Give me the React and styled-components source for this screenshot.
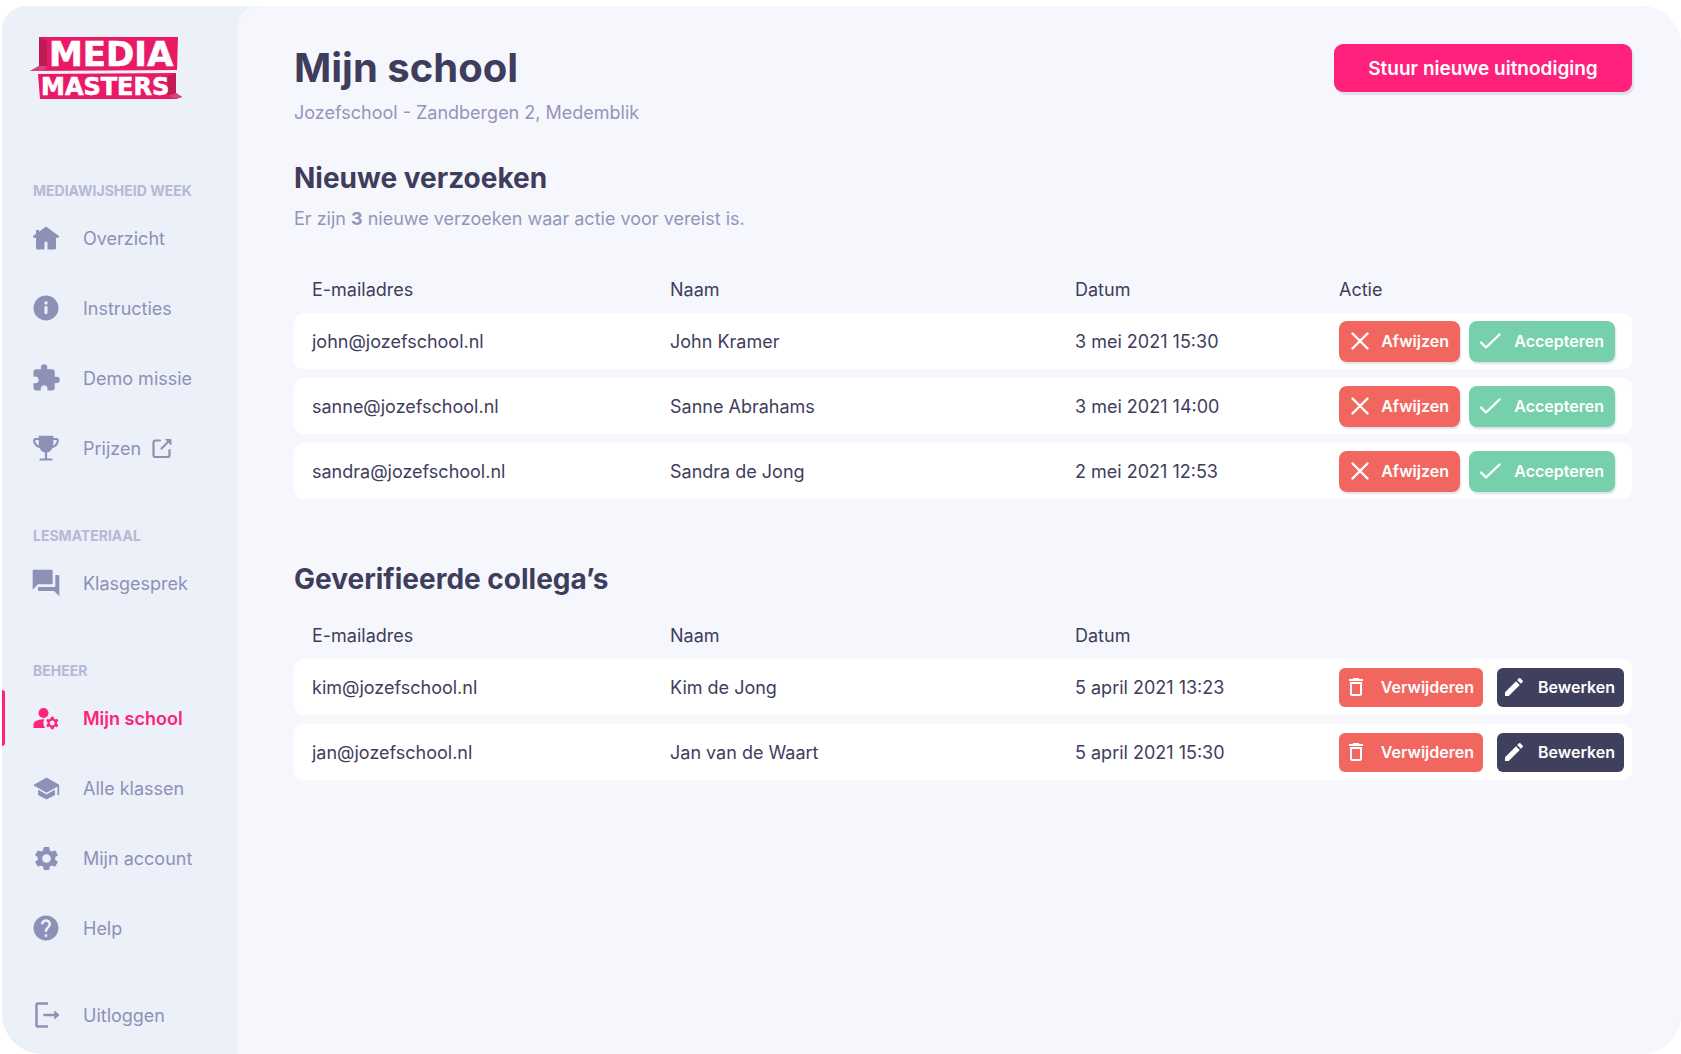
import React from 'react';
import styled, { createGlobalStyle } from 'styled-components';
import { MdExtension, MdForum, MdHelp, MdSettings, MdDeleteOutline, MdEdit, MdManageAccounts } from 'react-icons/md';
import { IoSchool } from 'react-icons/io5';

const GlobalStyle = createGlobalStyle`
  * {
    box-sizing: border-box;
  }

  body {
    margin: 0;
    background: #ffffff;
    color: #3f3d5c;
    font-family: Inter, Roboto, 'Liberation Sans', sans-serif;
    font-size: 18px;
  }
`;

const Page = styled.div`
  display: flex;
  min-height: 100vh;
  padding: 6px 0 0 2px;
`;

const Shell = styled.div`
  display: flex;
  flex: 1;
  overflow: hidden;
  border-radius: 24px 40px 40px 40px;
  background: #ebf0f9;
`;

const Sidebar = styled.aside`
  flex: 0 0 236px;
  padding-top: 22px;
`;

const LogoLink = styled.a`
  display: block;
  height: 151px;
  padding-left: 26px;
`;

const NavSection = styled.nav`
  margin-bottom: 41px;

  &:last-of-type {
    margin-bottom: 17px;
  }
`;

const NavHeading = styled.h2`
  margin: 0;
  padding-left: 31px;
  color: #b7b8d3;
  font-size: 14px;
  font-weight: 700;
  line-height: 24px;
  text-transform: uppercase;
`;

const NavItem = styled.a`
  display: flex;
  align-items: center;
  height: 70px;
  color: ${(props) => (props.$active ? '#ff217c' : '#8f90b6')};
  font-weight: ${(props) => (props.$active ? 600 : 400)};
  text-decoration: none;

  &::before {
    content: '';
    width: 3px;
    height: 56px;
    border-radius: 0 3px 3px 0;
    background: ${(props) => (props.$active ? '#ff217c' : 'transparent')};
  }
`;

const NavIcon = styled.span`
  display: flex;
  justify-content: center;
  width: 32px;
  margin: 0 21px 0 25px;
`;

const ExternalMark = styled.span`
  display: flex;
  margin-left: 10px;
`;

const Main = styled.main`
  flex: 1;
  min-width: 0;
  padding: 38px 49px 40px 56px;
  border-top-left-radius: 20px;
  background: #f6f7fd;
`;

const Header = styled.header`
  display: flex;
  align-items: flex-start;
  justify-content: space-between;
`;

const Title = styled.h1`
  margin: 0;
  font-size: 40px;
  font-weight: 700;
  line-height: 48px;
`;

const Subtitle = styled.p`
  margin: 0;
  color: #9495ba;
  line-height: 42px;
`;

const InviteButton = styled.button`
  height: 48px;
  width: 298px;
  border: 0;
  border-radius: 9px;
  background: #ff217c;
  box-shadow: 2px 3px 1px #dfe0ea;
  color: #ffffff;
  font: inherit;
  font-size: 19px;
  font-weight: 600;
  cursor: pointer;
`;

const Section = styled.section`
  margin-top: ${(props) => props.$gap}px;
`;

const SectionTitle = styled.h2`
  margin: 0;
  font-size: 28px;
  font-weight: 700;
  line-height: 40px;
`;

const Intro = styled.p`
  margin: 0;
  color: #9495ba;
  line-height: 42px;
`;

const Table = styled.table`
  width: 100%;
  margin-top: ${(props) => props.$gap}px;
  border-spacing: 0 9px;
  table-layout: fixed;
`;

const HeadCell = styled.th`
  width: ${(props) => props.$width || 'auto'};
  height: 30px;
  padding: 0 0 0 18px;
  font-weight: 400;
  text-align: left;
`;

const Cell = styled.td`
  height: 56px;
  padding: 0 0 0 18px;
  background: #ffffff;

  &:first-child {
    border-radius: 9px 0 0 9px;
  }

  &:last-child {
    border-radius: 0 9px 9px 0;
  }
`;

const Actions = styled.div`
  display: flex;
  gap: ${(props) => props.$gap}px;
`;

const tones = {
  reject: '#f1665f',
  accept: '#76d0ab',
  dark: '#3f3f5e',
};

const ActionButton = styled.button`
  display: flex;
  align-items: center;
  justify-content: space-between;
  width: ${(props) => props.$width}px;
  height: ${(props) => (props.$compact ? 39 : 41)}px;
  padding: 0 ${(props) => (props.$compact ? 9 : 11)}px 0 ${(props) => (props.$compact ? 5 : 10)}px;
  border: 0;
  border-radius: ${(props) => (props.$compact ? 6 : 8)}px;
  background: ${(props) => tones[props.$tone]};
  box-shadow: ${(props) => (props.$compact ? 'none' : '1px 2px 2px #dfe0ea')};
  color: #ffffff;
  font: inherit;
  font-size: 16px;
  font-weight: 600;
  cursor: pointer;
`;

const Logo = () => (
  <svg width="160" height="76" viewBox="0 -8 160 76" role="img" aria-label="Media Masters">
    <path d="M11 1 L150 1 L149 34 L2 35 L11 30 Z" fill="#e81a66" />
    <path d="M11 1 L19 5 L19 30 L11 31 Z" fill="#c01b55" />
    <path d="M2 35 L11 30 L19 30 L16 35 Z" fill="#d8437c" />
    <path d="M10 38 L148 37 L148 57 L154 61 L148 63 L12 63 Z" fill="#e81a66" />
    <path d="M148 37 L148 57 L140 60 L140 40 Z" fill="#c01b55" />
    <path d="M140 60 L148 57 L154 61 L148 63 Z" fill="#d8437c" />
    <g fill="#ffffff" stroke="#ffffff" strokeWidth="0.6" fontFamily="DejaVu Sans, sans-serif" fontWeight="700">
      <text x="21" y="30" fontSize="34">MEDIA</text>
      <text x="13" y="59" fontSize="24">MASTERS</text>
    </g>
  </svg>
);

const HomeIcon = () => (
  <svg width="28" height="28" viewBox="0 0 28 28" fill="currentColor">
    <path d="M14 2.500 L27 12 Q27.500 13.800 26 13.800 L24 13.800 V24 Q24 25.500 22.500 25.500 H15.500 V18.500 Q15.500 17.500 14 17.500 Q12.500 17.500 12.500 18.500 V25.500 H5.500 Q4 25.500 4 24 V13.800 H2 Q0.500 13.800 1 12 L4 9.800 V6 H7 V7.700 Z" />
  </svg>
);

const InfoIcon = () => (
  <svg width="28" height="28" viewBox="0 0 28 28">
    <circle cx="14" cy="14" r="12.500" fill="currentColor" />
    <circle cx="14" cy="9" r="1.700" fill="#ebf0f9" />
    <rect x="12.500" y="12" width="3" height="8" rx="1.200" fill="#ebf0f9" />
  </svg>
);

const TrophyIcon = () => (
  <svg width="28" height="28" viewBox="0 0 28 28" fill="none" stroke="currentColor" strokeWidth="2.200" strokeLinecap="round">
    <path d="M7 5 H3.500 Q2 5 2.300 7.500 Q3.300 12 8 12.800 M21 5 H24.500 Q26 5 25.700 7.500 Q24.700 12 20 12.800" />
    <path d="M7.800 2.800 H20.200 V9.500 C20.200 14.500 17.500 17.500 14 17.500 C10.500 17.500 7.800 14.500 7.800 9.500 Z" fill="currentColor" />
    <path d="M14 17 V25 M8.500 25.500 H19.500" />
  </svg>
);

const LogoutIcon = () => (
  <svg width="28" height="28" viewBox="0 0 28 28" fill="none" stroke="currentColor" strokeWidth="2.500" strokeLinecap="round" strokeLinejoin="round">
    <path d="M15 2.500 H6 Q4.500 2.500 4.500 4 V24 Q4.500 25.500 6 25.500 H15" />
    <path d="M12.500 14 H23" />
    <path d="M23 10.500 L27 14 L23 17.500 Z" fill="currentColor" strokeWidth="1" />
  </svg>
);

const ExternalIcon = () => (
  <svg width="22" height="22" viewBox="0 0 22 22" fill="none" stroke="currentColor" strokeWidth="2.200" strokeLinecap="round" strokeLinejoin="round">
    <path d="M9 3.500 H4.500 Q2.500 3.500 2.500 5.500 V18 Q2.500 20 4.500 20 H16.500 Q18.500 20 18.500 18 V13" />
    <path d="M10.500 11.500 L18.500 3.500" />
    <path d="M15 2.500 H20 V7.500 Z" fill="currentColor" strokeWidth="1" />
  </svg>
);

const CrossIcon = () => (
  <svg width="22" height="22" viewBox="0 0 22 22" fill="none" stroke="currentColor" strokeWidth="2.400" strokeLinecap="round">
    <path d="M3.500 3.500 L18.500 18.500 M18.500 3.500 L3.500 18.500" />
  </svg>
);

const CheckIcon = () => (
  <svg width="22" height="22" viewBox="0 0 22 22" fill="none" stroke="currentColor" strokeWidth="2.400" strokeLinecap="round" strokeLinejoin="round">
    <path d="M2 12.500 L7 17.500 L20.500 4.500" />
  </svg>
);

const menu = [
  {
    heading: 'Mediawijsheid week',
    items: [
      { label: 'Overzicht', icon: <HomeIcon /> },
      { label: 'Instructies', icon: <InfoIcon /> },
      { label: 'Demo missie', icon: <MdExtension size={30} /> },
      { label: 'Prijzen', icon: <TrophyIcon />, external: true },
    ],
  },
  {
    heading: 'Lesmateriaal',
    items: [{ label: 'Klasgesprek', icon: <MdForum size={32} /> }],
  },
  {
    heading: 'Beheer',
    items: [
      { label: 'Mijn school', icon: <MdManageAccounts size={30} />, active: true },
      { label: 'Alle klassen', icon: <IoSchool size={27} /> },
      { label: 'Mijn account', icon: <MdSettings size={29} /> },
      { label: 'Help', icon: <MdHelp size={30} /> },
    ],
  },
];

const requests = [
  { email: 'john@jozefschool.nl', name: 'John Kramer', date: '3 mei 2021 15:30' },
  { email: 'sanne@jozefschool.nl', name: 'Sanne Abrahams', date: '3 mei 2021 14:00' },
  { email: 'sandra@jozefschool.nl', name: 'Sandra de Jong', date: '2 mei 2021 12:53' },
];

const colleagues = [
  { email: 'kim@jozefschool.nl', name: 'Kim de Jong', date: '5 april 2021 13:23' },
  { email: 'jan@jozefschool.nl', name: 'Jan van de Waart', date: '5 april 2021 15:30' },
];

const MenuLink = ({ item }) => (
  <NavItem href="#" $active={item.active} aria-current={item.active ? 'page' : undefined}>
    <NavIcon>{item.icon}</NavIcon>
    {item.label}
    {item.external && (
      <ExternalMark>
        <ExternalIcon />
      </ExternalMark>
    )}
  </NavItem>
);

const PeopleTable = ({ people, gap, actionLabel, renderActions }) => (
  <Table $gap={gap}>
    <thead>
      <tr>
        <HeadCell>E-mailadres</HeadCell>
        <HeadCell $width="405px">Naam</HeadCell>
        <HeadCell $width="264px">Datum</HeadCell>
        <HeadCell $width="311px">{actionLabel}</HeadCell>
      </tr>
    </thead>
    <tbody>
      {people.map((person) => (
        <tr key={person.email}>
          <Cell>{person.email}</Cell>
          <Cell>{person.name}</Cell>
          <Cell>{person.date}</Cell>
          <Cell>{renderActions(person)}</Cell>
        </tr>
      ))}
    </tbody>
  </Table>
);

const App = () => (
  <Page>
    <GlobalStyle />
    <Shell>
      <Sidebar>
        <LogoLink href="#">
          <Logo />
        </LogoLink>
        {menu.map((section) => (
          <NavSection key={section.heading}>
            <NavHeading>{section.heading}</NavHeading>
            {section.items.map((item) => (
              <MenuLink key={item.label} item={item} />
            ))}
          </NavSection>
        ))}
        <MenuLink item={{ label: 'Uitloggen', icon: <LogoutIcon /> }} />
      </Sidebar>

      <Main>
        <Header>
          <div>
            <Title>Mijn school</Title>
            <Subtitle>Jozefschool - Zandbergen 2, Medemblik</Subtitle>
          </div>
          <InviteButton type="button">Stuur nieuwe uitnodiging</InviteButton>
        </Header>

        <Section $gap={24}>
          <SectionTitle>Nieuwe verzoeken</SectionTitle>
          <Intro>
            Er zijn <b>3</b> nieuwe verzoeken waar actie voor vereist is.
          </Intro>
          <PeopleTable
            people={requests}
            gap={25}
            actionLabel="Actie"
            renderActions={() => (
              <Actions $gap={9}>
                <ActionButton type="button" $tone="reject" $width={121}>
                  <CrossIcon />
                  Afwijzen
                </ActionButton>
                <ActionButton type="button" $tone="accept" $width={146}>
                  <CheckIcon />
                  Accepteren
                </ActionButton>
              </Actions>
            )}
          />
        </Section>

        <Section $gap={51}>
          <SectionTitle>Geverifieerde collega’s</SectionTitle>
          <PeopleTable
            people={colleagues}
            gap={12}
            renderActions={() => (
              <Actions $gap={14}>
                <ActionButton type="button" $tone="reject" $width={144} $compact>
                  <MdDeleteOutline size={24} />
                  Verwijderen
                </ActionButton>
                <ActionButton type="button" $tone="dark" $width={127} $compact>
                  <MdEdit size={24} />
                  Bewerken
                </ActionButton>
              </Actions>
            )}
          />
        </Section>
      </Main>
    </Shell>
  </Page>
);

export default App;
